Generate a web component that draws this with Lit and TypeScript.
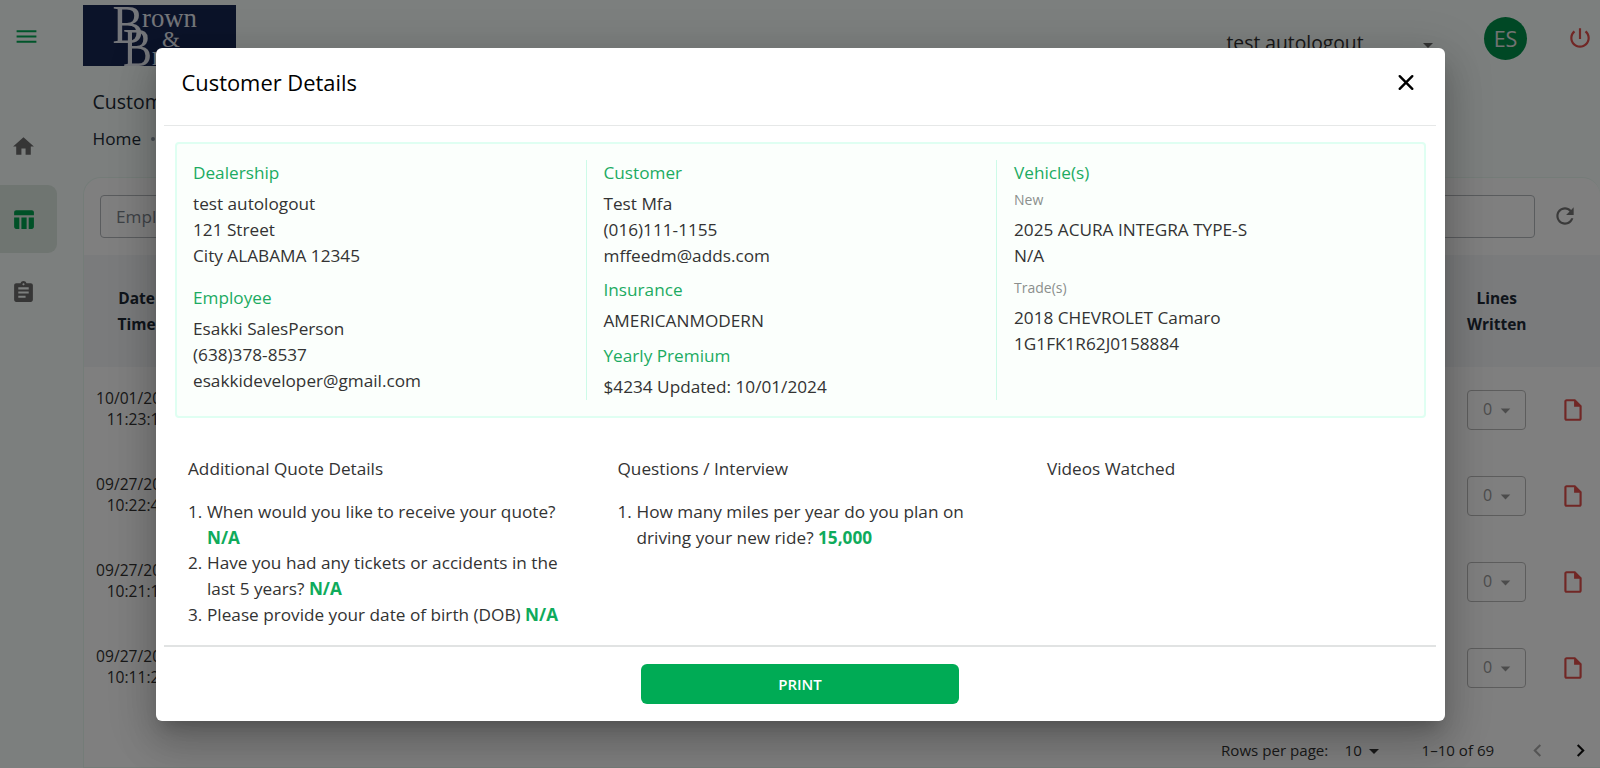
import { LitElement, html, css, svg } from "lit";
import { customElement } from "lit/decorators.js";

const rows = [
  ["10/01/2024", "11:23:14"],
  ["09/27/2024", "10:22:41"],
  ["09/27/2024", "10:21:15"],
  ["09/27/2024", "10:11:28"],
];

const icon = (name: string, size: number, d: string) =>
  html`<svg class=${name} width=${size} height=${size} viewBox="0 0 24 24" fill="currentColor">${svg`<path d=${d} />`}</svg>`;

const MENU = "M2.5 18h19v-2h-19v2zm0-5h19v-2h-19v2zm0-7v2h19V6h-19z";
const HOME = "M10 20v-6h4v6h5v-8h3L12 3 2 12h3v8z";
const TABLE =
  "M10 10.02h5V21h-5V10.02zM17 21h3c1.1 0 2-.9 2-2v-9h-5v11zm3-18H5c-1.1 0-2 .9-2 2v3h19V5c0-1.1-.9-2-2-2zM3 19c0 1.1.9 2 2 2h3V10H3v9z";
const CLIP =
  "M19 3h-4.18C14.4 1.84 13.3 1 12 1c-1.3 0-2.4.84-2.82 2H5c-1.1 0-2 .9-2 2v14c0 1.1.9 2 2 2h14c1.1 0 2-.9 2-2V5c0-1.1-.9-2-2-2zm-7 0c.55 0 1 .45 1 1s-.45 1-1 1-1-.45-1-1 .45-1 1-1zm2 14H7v-2h7v2zm3-4H7v-2h10v2zm0-4H7V7h10v2z";
const POWER =
  "M13 3h-2v10h2V3zm4.83 2.17l-1.42 1.42C17.99 7.86 19 9.81 19 12c0 3.87-3.13 7-7 7s-7-3.13-7-7c0-2.19 1.01-4.14 2.58-5.42L6.17 5.17C4.23 6.82 3 9.26 3 12c0 4.97 4.03 9 9 9s9-4.03 9-9c0-2.74-1.23-5.18-3.17-6.83z";
const REFRESH =
  "M17.65 6.35C16.2 4.9 14.21 4 12 4c-4.42 0-7.99 3.58-7.99 8s3.57 8 7.99 8c3.73 0 6.84-2.55 7.73-6h-2.08c-.82 2.33-3.04 4-5.65 4-3.31 0-6-2.69-6-6s2.69-6 6-6c1.66 0 3.14.69 4.22 1.78L13 11h7V4l-2.35 2.35z";
const FILE =
  "M14 2H6c-1.1 0-1.99.9-1.99 2L4 20c0 1.1.89 2 1.99 2H18c1.1 0 2-.9 2-2V8l-6-6zM6 20V4h7v5h5v11H6z";
const ARROW = "M7 10l5 5 5-5z";
const LEFT = "M15.41 7.41L14 6l-6 6 6 6 1.41-1.41L10.83 12z";
const RIGHT = "M10 6L8.59 7.41 13.17 12l-4.58 4.59L10 18l6-6z";

@customElement("app-root")
export class AppRoot extends LitElement {
  static styles = css`
    :host {
      display: block;
      position: relative;
      width: 1600px;
      height: 768px;
      overflow: hidden;
      font-family: "Open Sans", sans-serif;
      font-size: 17.2px;
      line-height: 25.8px;
      color: #333;
      background: #f9fefc;
    }
    * { box-sizing: border-box; }
    svg { display: block; flex: none; }
    .page { display: flex; width: 1600px; height: 768px; }
    .side { width: 83px; flex: none; display: flex; flex-direction: column; color: #6c6c6c; }
    .burger { color: #00ab55; height: 73px; padding: 24px 0 0 14px; margin-bottom: 39px; }
    .nav { height: 68px; width: 57px; margin-bottom: 5px; display: flex; align-items: center; padding-left: 11px; }
    .nav.on { background: #deeae2; border-radius: 0 9px 9px 0; color: #00a24f; }
    .main { flex: 1; min-width: 0; display: flex; flex-direction: column; }
    .top { height: 72px; display: flex; padding-top: 5px; }
    .logo { width: 153px; height: 61px; background: #172653; overflow: hidden; flex: none; margin-left: -0.5px; }
    .top .who { margin-left: 991px; width: 190px; padding-top: 25px; font-size: 19.3px; display: flex; }
    .who span { width: 136px; white-space: nowrap; }
    .who svg { margin: 3px 0 0 53px; color: #666; }
    .avatar { width: 43px; height: 43px; border-radius: 50%; background: #00914a; color: #e4e4e4; font-size: 21.5px; margin: 12px 0 0 67.5px; display: flex; align-items: center; justify-content: center; flex: none; }
    .top .power { margin: 20px 0 0 40px; color: #e24e4a; }
    .title { font-size: 19.5px; line-height: 30px; padding: 15px 0 0 9.5px; color: #212b36; height: 52px; }
    .crumb { padding: 2px 0 0 9.5px; display: flex; height: 53.5px; color: #212b36; }
    .crumb i { width: 4px; height: 4px; border-radius: 50%; background: #919eab; margin: 11px 0 0 10px; }
    .card { background: #fff; border: 1px solid #e8f8f1; border-right: 0; border-radius: 18px 18px 0 0; height: 591px; display: flex; flex-direction: column; overflow: hidden; }
    .filter { height: 77px; padding: 17px 0 0 16px; display: flex; flex: none; }
    .box { width: 1435px; height: 43px; border: 1px solid #b4b8bc; border-radius: 4px; padding: 7.5px 15px; color: #7d858d; }
    .filter svg { margin: 8px 0 0 17px; color: #757575; }
    .row { display: flex; justify-content: space-between; height: 86px; padding-left: 12px; flex: none; }
    .row.head { height: 112px; background: #f4f6f9; font-weight: 700; font-size: 15.5px; color: #212b36; text-align: center; padding: 31px 73.5px 0 33.5px; }
    .when { width: 88px; padding-top: 20.5px; padding-right: 5px; text-align: center; font-size: 15.6px; line-height: 21.5px; color: #333; }
    .acts { width: 133px; display: flex; align-items: center; }
    .sel { width: 59px; height: 40px; border: 1px solid #bbb; border-radius: 4px; display: flex; align-items: center; padding-left: 15px; font-size: 16px; color: #999; }
    .sel svg { margin-left: 2px; }
    .acts .file { margin: -1px 0 0 33.5px; color: #e24e4a; }
    .pager { display: flex; align-items: center; height: 54px; padding: 0 0 0 1137px; font-size: 15.1px; margin-top: 12.5px; flex: none; }
    .pager span { white-space: nowrap; }
    .p1 { width: 123.5px; }
    .p2 { width: 17px; }
    .p3 { width: 103.5px; margin-left: 36px; }
    .dim { color: #aaa; }
    .pager .next { margin-left: 18px; color: #111; }
    .backdrop { position: absolute; inset: 0; background: rgba(0, 0, 0, 0.5); display: flex; align-items: center; justify-content: center; }
    .dialog { width: 1289px; height: 673px; background: #fff; border-radius: 6px; padding: 0 8.5px; display: flex; flex-direction: column; box-shadow: 0 11px 15px -7px rgba(0,0,0,.2), 0 24px 38px 3px rgba(0,0,0,.14), 0 9px 46px 8px rgba(0,0,0,.12); }
    .dh { height: 78px; flex: none; border-bottom: 1px solid #e6e8e8; display: flex; justify-content: space-between; padding: 19px 18.5px 0 17.5px; font-size: 21.9px; line-height: 31px; color: #000; font-weight: 500; }
    .dh svg { margin-top: 1px; }
    .info { margin: 16px 10px 0 11px; height: 276px; flex: none; border: 2px solid #dffff2; border-radius: 4px; background: #fbfffc; padding: 16px 0 16px 16px; display: flex; }
    .c { width: 410.5px; flex: none; }
    .c + .c { padding-left: 17px; border-left: 1px solid #cdfbe8; }
    .c:first-child { width: 392.5px; }
    h4 { margin: 0 0 5px; font: inherit; color: #1cab62; }
    h4.first { margin-bottom: 6px; }
    .gap8 { padding-top: 8.8px; }
    .gap16 { padding-top: 16.5px; }
    small { display: block; font-size: 14px; line-height: 22px; color: #8b8f8d; }
    .t1 { margin: -2px 0 6px; }
    .t2 { margin: 8px 0 6px; }
    .qs { display: flex; padding: 38px 0 0 24px; height: 227px; flex: none; }
    .q { width: 429.5px; flex: none; }
    .q:last-child { width: auto; }
    .qh { margin-bottom: 17.5px; }
    ol { margin: 0; padding: 0; list-style: none; }
    li { display: flex; width: 392px; }
    li span { width: 19px; flex: none; }
    b { color: #0fab5c; font-weight: 700; }
    .df { flex: 1; border-top: 2px solid #e1e3e3; display: flex; justify-content: center; padding-top: 17.5px; }
    .print { width: 318px; height: 39.5px; border-radius: 6px; background: #00ab55; color: #fff; border: 0; padding: 0; font: 600 15px/38px "Open Sans", sans-serif; text-align: center; }
  `;

  render() {
    return html`
      <div class="page">
        <nav class="side">
          <div class="burger">${icon("menu", 25, MENU)}</div>
          <div class="nav">${icon("home", 25, HOME)}</div>
          <div class="nav on">${icon("table", 25, TABLE)}</div>
          <div class="nav">${icon("clip", 25, CLIP)}</div>
        </nav>
        <main class="main">
          <header class="top">
            <svg class="logo" width="153" height="61" viewBox="0 0 153 61" font-family="Liberation Serif, serif" fill="#e8ecf4">
              <text x="29.5" y="37.5" font-size="55" textLength="31" lengthAdjust="spacingAndGlyphs">B</text>
              <text x="40" y="60.5" font-size="54" textLength="29" lengthAdjust="spacingAndGlyphs">B</text>
              <text x="59" y="22" font-size="27" textLength="55" lengthAdjust="spacingAndGlyphs">rown</text>
              <text x="79" y="42" font-size="23">&amp;</text>
              <text x="69" y="60" font-size="27">rown</text>
            </svg>
            <div class="who"><span>test autologout</span>${icon("a", 24, ARROW)}</div>
            <div class="avatar">ES</div>
            ${icon("power", 26, POWER)}
          </header>
          <div class="title">Customers</div>
          <div class="crumb">Home<i></i></div>
          <section class="card">
            <div class="filter"><div class="box">Employee</div>${icon("reload", 26, REFRESH)}</div>
            <div class="row head"><div>Date<br />Time</div><div>Lines<br />Written</div></div>
            ${rows.map(
              ([d, t]) => html`<div class="row">
                <div class="when">${d}<br />${t}</div>
                <div class="acts">
                  <div class="sel">0${icon("a", 23, ARROW)}</div>
                  ${icon("file", 26, FILE)}
                </div>
              </div>`
            )}
            <div class="pager">
              <span class="p1">Rows per page:</span><span class="p2">10</span>${icon("a", 24, ARROW)}
              <span class="p3">1–10 of 69</span>${icon("dim", 25, LEFT)}${icon("next", 25, RIGHT)}
            </div>
          </section>
        </main>
      </div>
      <div class="backdrop">
        <div class="dialog" role="dialog">
          <div class="dh">
            <span>Customer Details</span>
            <svg width="24" height="24" viewBox="0 0 24 24" fill="none" stroke="#000" stroke-width="2.4" stroke-linecap="round"><path d="M5.7 8.2l12.6 12.6M18.3 8.2L5.7 20.8" /></svg>
          </div>
          <div class="info">
            <div class="c">
              <h4 class="first">Dealership</h4>
              <div>test autologout</div><div>121 Street</div><div>City ALABAMA 12345</div>
              <h4 class="gap16">Employee</h4>
              <div>Esakki SalesPerson</div><div>(638)378-8537</div><div>esakkideveloper@gmail.com</div>
            </div>
            <div class="c">
              <h4 class="first">Customer</h4>
              <div>Test Mfa</div><div>(016)111-1155</div><div>mffeedm@adds.com</div>
              <h4 class="gap8">Insurance</h4>
              <div>AMERICANMODERN</div>
              <h4 class="gap8">Yearly Premium</h4>
              <div>$4234 Updated: 10/01/2024</div>
            </div>
            <div class="c">
              <h4 class="first">Vehicle(s)</h4>
              <small class="t1">New</small>
              <div>2025 ACURA INTEGRA TYPE-S</div><div>N/A</div>
              <small class="t2">Trade(s)</small>
              <div>2018 CHEVROLET Camaro</div><div>1G1FK1R62J0158884</div>
            </div>
          </div>
          <div class="qs">
            <div class="q">
              <div class="qh">Additional Quote Details</div>
              <ol>
                <li><span>1.</span><div>When would you like to receive your quote?<br /><b>N/A</b></div></li>
                <li><span>2.</span><div>Have you had any tickets or accidents in the<br />last 5 years? <b>N/A</b></div></li>
                <li><span>3.</span><div>Please provide your date of birth (DOB) <b>N/A</b></div></li>
              </ol>
            </div>
            <div class="q">
              <div class="qh">Questions / Interview</div>
              <ol>
                <li><span>1.</span><div>How many miles per year do you plan on<br />driving your new ride? <b>15,000</b></div></li>
              </ol>
            </div>
            <div class="q"><div class="qh">Videos Watched</div></div>
          </div>
          <div class="df"><button class="print">PRINT</button></div>
        </div>
      </div>
    `;
  }
}
